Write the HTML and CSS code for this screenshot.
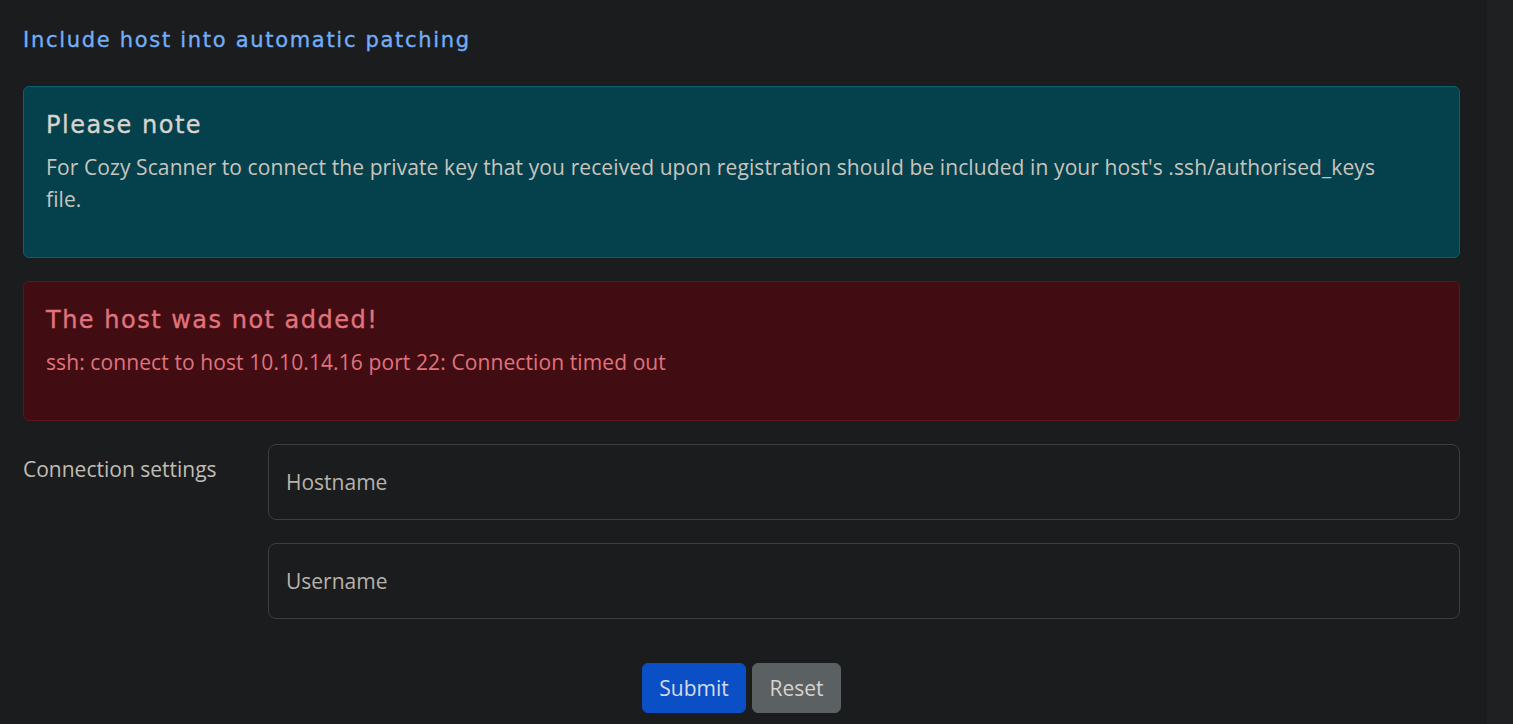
FILE: index.html
```html
<!DOCTYPE html>
<html lang="en">
<head>
<meta charset="utf-8">
<title>Include host into automatic patching</title>
<link rel="stylesheet" href="styles.css">
</head>
<body>
<div class="page">
  <main class="main">
    <h2 class="title">Include host into automatic patching</h2>
    <div class="alert alert-info">
      <h4 class="alert-heading">Please note</h4>
      <p class="alert-text">For Cozy Scanner to connect the private key that you received upon registration should be included in your host's .ssh/authorised_keys file.</p>
    </div>
    <div class="alert alert-danger">
      <h4 class="alert-heading">The host was not added!</h4>
      <p class="alert-text">ssh: connect to host 10.10.14.16 port 22: Connection timed out</p>
    </div>
    <form class="form">
      <div class="form-row">
        <label class="form-label">Connection settings</label>
        <div class="inputs">
          <input class="input" type="text" placeholder="Hostname">
          <input class="input" type="text" placeholder="Username">
        </div>
      </div>
      <div class="actions">
        <button type="button" class="btn btn-primary">Submit</button>
        <button type="reset" class="btn btn-secondary">Reset</button>
      </div>
    </form>
  </main>
  <aside class="side"></aside>
</div>
</body>
</html>
```

FILE: styles.css
```css
* { box-sizing: border-box; }
html, body { margin: 0; padding: 0; height: 100%; }
body {
  background: #1b1c1e;
  font-family: "Open Sans", "Noto Sans", sans-serif;
  color: #c9c5bd;
  overflow: hidden;
}
.page {
  display: flex;
  height: 724px;
}
.main {
  width: 1487px;
  padding: 0 27px 0 23px;
}
.side {
  flex: 1;
  background: #1e2022;
}
.title {
  margin: 0;
  padding-top: 26px;
  height: 86px;
  font-family: "DejaVu Sans", "Inter", sans-serif;
  font-weight: normal;
  font-size: 21px;
  line-height: 28px;
  color: #72adf8;
  letter-spacing: 1.7px;
  -webkit-text-stroke: 0.35px #72adf8;
}
.alert {
  border: 1px solid;
  border-radius: 6px;
  padding: 22px;
  margin-bottom: 23px;
}
.alert-info {
  background: #05414d;
  border-color: #0a6174;
}
.alert-danger {
  background: #410d12;
  border-color: #5a161c;
  color: #e0737d;
}
.alert-heading {
  margin: 2px 0 11px;
  font-family: "DejaVu Sans", "Inter", sans-serif;
  font-weight: normal;
  font-size: 24px;
  line-height: 29px;
  color: #d8d4cc;
  letter-spacing: 1.5px;
  -webkit-text-stroke: 0.35px #d8d4cc;
}
.alert-danger .alert-heading {
  color: #e0737d;
  -webkit-text-stroke-color: #e0737d;
}
.alert-text {
  margin: 0 0 20px;
  font-size: 21px;
  line-height: 32px;
  padding-right: 40px;
  letter-spacing: 0.1px;
}
.form-row {
  display: flex;
}
.form-label {
  width: 245px;
  padding-top: 12px;
  font-size: 21px;
  line-height: 26px;
  color: #c2bdb4;
}
.inputs {
  flex: 1;
  display: flex;
  flex-direction: column;
  gap: 23px;
}
.input {
  height: 76px;
  background: #1b1c1e;
  border: 1px solid #3b3e41;
  border-radius: 8px;
  padding: 0 17px;
  font-family: "Open Sans", "Noto Sans", sans-serif;
  font-size: 21px;
  color: #c9c5bd;
  outline: none;
}
.input::placeholder { color: #b8b3aa; opacity: 1; }
.actions {
  display: flex;
  justify-content: center;
  gap: 6px;
  margin-top: 44px;
}
.btn {
  height: 50px;
  border-radius: 6px;
  border: 1px solid transparent;
  font-family: "Open Sans", "Noto Sans", sans-serif;
  font-size: 21px;
  padding: 0;
  cursor: pointer;
}
.btn-primary {
  background: #0b4fc6;
  border-color: #0b4fc6;
  color: #d6dbe6;
  width: 104px;
}
.btn-secondary {
  background: #5b6063;
  border-color: #5b6063;
  color: #d6d3cd;
  width: 89px;
}
```
